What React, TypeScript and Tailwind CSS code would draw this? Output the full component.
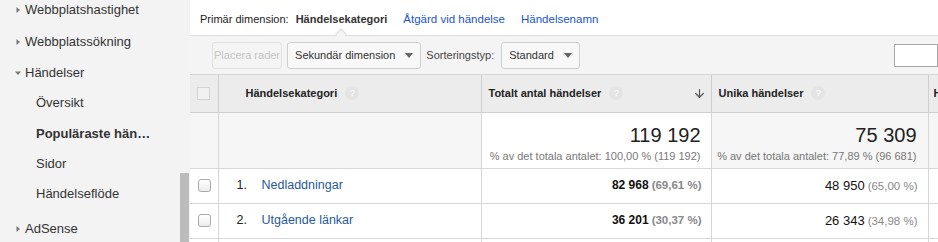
import { ArrowDown } from "lucide-react";

const font = { fontFamily: '"Liberation Sans", Arial, Helvetica, sans-serif' };

function Tri({ open }: { open?: boolean }) {
  return open ? (
    <svg width="8" height="8" viewBox="0 0 8 8" className="mr-[3px]">
      <path d="M1 2.5h6L4 6z" fill="#777" />
    </svg>
  ) : (
    <svg width="8" height="8" viewBox="0 0 8 8" className="mr-[3px]">
      <path d="M2.5 1v6L6 4z" fill="#777" />
    </svg>
  );
}

function Help() {
  return (
    <span className="ml-[8px] inline-flex h-[14px] w-[14px] items-center justify-center rounded-full bg-[#e4e4e4] text-[9px] font-normal leading-none text-white">
      ?
    </span>
  );
}

function Caret() {
  return (
    <svg width="8" height="5" viewBox="0 0 8 5" className="ml-[10px]">
      <path d="M0 0h8L4 5z" fill="#666" />
    </svg>
  );
}

const sidebar = [
  { label: "Webbplatshastighet", kind: "closed", h: "h-[32px]" },
  { label: "Webbplatssökning", kind: "closed", h: "h-[32px]" },
  { label: "Händelser", kind: "open", h: "h-[30px]" },
  { label: "Översikt", kind: "sub", h: "h-[30px]" },
  { label: "Populäraste hän…", kind: "active", h: "h-[32px]" },
  { label: "Sidor", kind: "sub", h: "h-[28px]" },
  { label: "Händelseflöde", kind: "sub", h: "h-[32px]" },
  { label: "AdSense", kind: "closed", h: "h-[38px]" },
];

const rows = [
  { n: "1.", name: "Nedladdningar", total: "82 968", tp: "(69,61 %)", uniq: "48 950", up: "(65,00 %)" },
  { n: "2.", name: "Utgående länkar", total: "36 201", tp: "(30,37 %)", uniq: "26 343", up: "(34,98 %)" },
];

export default function App() {
  return (
    <div style={font} className="flex h-[242px] w-[938px] overflow-hidden bg-white text-[11px] text-[#222]">
      {/* Sidebar */}
      <div className="relative w-[190px] shrink-0 overflow-hidden bg-[#f3f3f3]">
        <div className="-mt-[6px]">
          {sidebar.map((s) => (
            <div
              key={s.label}
              className={`flex items-center text-[13px] ${s.h} ${
                s.kind === "sub" || s.kind === "active" ? "pl-[36px]" : "pl-[14px]"
              } ${s.kind === "active" ? "font-bold" : ""} text-[#333]`}
            >
              {s.kind === "closed" && <Tri />}
              {s.kind === "open" && <Tri open />}
              {s.label}
            </div>
          ))}
        </div>
        <div className="absolute left-[180px] top-[173px] h-[69px] w-[9px] bg-[#bcbcbc]" />
      </div>

      {/* Main */}
      <div className="flex min-w-0 flex-1 flex-col">
        {/* Primär dimension */}
        <div className="relative flex h-[36px] shrink-0 items-center border-b border-[#dcdcdc] pl-[10px] pt-[4px]">
          <span className="text-[#222]">Primär dimension:</span>
          <span className="relative ml-[7px] font-bold text-[#333]">
            Händelsekategori
            <span className="absolute left-1/2 top-[19px] h-[8px] w-[8px] -translate-x-1/2 rotate-45 border-l border-t border-[#dcdcdc] bg-[#f4f4f4]" />
          </span>
          <span className="ml-[16px] text-[11.5px] text-[#1a55cc]">Åtgärd vid händelse</span>
          <span className="ml-[16px] text-[11.5px] text-[#1a55cc]">Händelsenamn</span>
        </div>

        {/* Verktygsrad */}
        <div className="flex h-[39px] shrink-0 items-center border-b border-[#d6d6d6] bg-[#f4f4f4] pl-[22px]">
          <div className="flex h-[27px] items-center rounded-[3px] border border-[#e0e0e0] px-[1px] text-[#c4c4c4]">
            Placera rader
          </div>
          <div className="ml-[5px] flex h-[27px] items-center rounded-[3px] border border-[#cfcfcf] bg-[#f8f8f8] pl-[7px] pr-[7px] text-[#333]">
            Sekundär dimension
            <Caret />
          </div>
          <span className="ml-[5px] text-[#444]">Sorteringstyp:</span>
          <div className="ml-[7px] flex h-[27px] items-center rounded-[3px] border border-[#cfcfcf] bg-[#f8f8f8] pl-[7px] pr-[7px] text-[#333]">
            Standard
            <Caret />
          </div>
          <div className="ml-auto h-[23px] w-[44px] shrink-0 border border-[#a8a8a8] bg-white" />
        </div>

        {/* Tabell */}
        <table className="w-[760px] shrink-0 table-fixed border-collapse">
          <colgroup>
            <col className="w-[28px]" />
            <col className="w-[263px]" />
            <col className="w-[230px]" />
            <col className="w-[217px]" />
            <col className="w-[22px]" />
          </colgroup>
          <thead>
            <tr className="h-[37px] bg-[#ececec] font-bold text-[#222]">
              <th className="border-r border-b border-[#cfcfcf] px-0">
                <div className="ml-[7px] h-[13px] w-[13px] border border-[#d3d3d3] bg-[#f1f1f1]" />
              </th>
              <th className="border-r border-b border-[#cfcfcf] pl-[27px] text-left">
                <span className="flex items-center">
                  Händelsekategori
                  <Help />
                </span>
              </th>
              <th className="border-r border-b border-[#cfcfcf] pl-[7px] pr-[2px] text-left">
                <span className="flex items-center">
                  Totalt antal händelser
                  <Help />
                  <ArrowDown size={13} strokeWidth={2.2} className="ml-auto mr-[3px] text-[#555]" />
                </span>
              </th>
              <th className="border-r border-b border-[#cfcfcf] pl-[7px] text-left">
                <span className="flex items-center">
                  Unika händelser
                  <Help />
                </span>
              </th>
              <th className="border-b border-[#cfcfcf] pl-[5px] text-left">H</th>
            </tr>
          </thead>
          <tbody>
            <tr className="h-[56px]">
              <td className="border-r border-b border-[#d6d6d6] bg-[#f6f6f6]" />
              <td className="border-r border-b border-[#d6d6d6] bg-[#f6f6f6]" />
              <td className="border-r border-b border-[#d6d6d6] bg-white pr-[10px] text-right align-top">
                <div className="mt-[11px] text-[20px] leading-[22px] text-[#222]">119 192</div>
                <div className="mt-[2px] text-[11px] text-[#777]">% av det totala antalet: 100,00 % (119 192)</div>
              </td>
              <td className="border-r border-b border-[#d6d6d6] bg-[#f6f6f6] pr-[11px] text-right align-top">
                <div className="mt-[11px] text-[20px] leading-[22px] text-[#222]">75 309</div>
                <div className="mt-[2px] text-[11px] text-[#777]">% av det totala antalet: 77,89 % (96 681)</div>
              </td>
              <td className="border-b border-[#d6d6d6] bg-[#f6f6f6]" />
            </tr>
            {rows.map((r) => (
              <tr key={r.n} className="h-[35px] bg-white">
                <td className="border-r border-b border-[#d6d6d6]">
                  <div className="ml-[8px] h-[13px] w-[13px] rounded-[3px] border border-[#aaa] bg-gradient-to-b from-white to-[#ececec]" />
                </td>
                <td className="border-r border-b border-[#d6d6d6] text-[12.5px]">
                  <span className="ml-[18px] inline-block w-[25px] text-[#222]">{r.n}</span>
                  <span className="text-[#1f5a9c]">{r.name}</span>
                </td>
                <td className="border-r border-b border-[#d6d6d6] pr-[9px] text-right">
                  <span className="text-[12px] font-bold text-[#111]">{r.total}</span>
                  <span className="ml-[3px] text-[11.5px] font-bold text-[#888]">{r.tp}</span>
                </td>
                <td className="border-r border-b border-[#d6d6d6] pr-[10px] text-right">
                  <span className="text-[13px] text-[#111]">{r.uniq}</span>
                  <span className="ml-[3px] text-[11.5px] text-[#888]">{r.up}</span>
                </td>
                <td className="border-b border-[#d6d6d6]" />
              </tr>
            ))}
            <tr className="h-[10px]">
              <td className="border-r border-[#d6d6d6]" />
              <td className="border-r border-[#d6d6d6]" />
              <td className="border-r border-[#d6d6d6]" />
              <td className="border-r border-[#d6d6d6]" />
              <td />
            </tr>
          </tbody>
        </table>
      </div>
    </div>
  );
}
